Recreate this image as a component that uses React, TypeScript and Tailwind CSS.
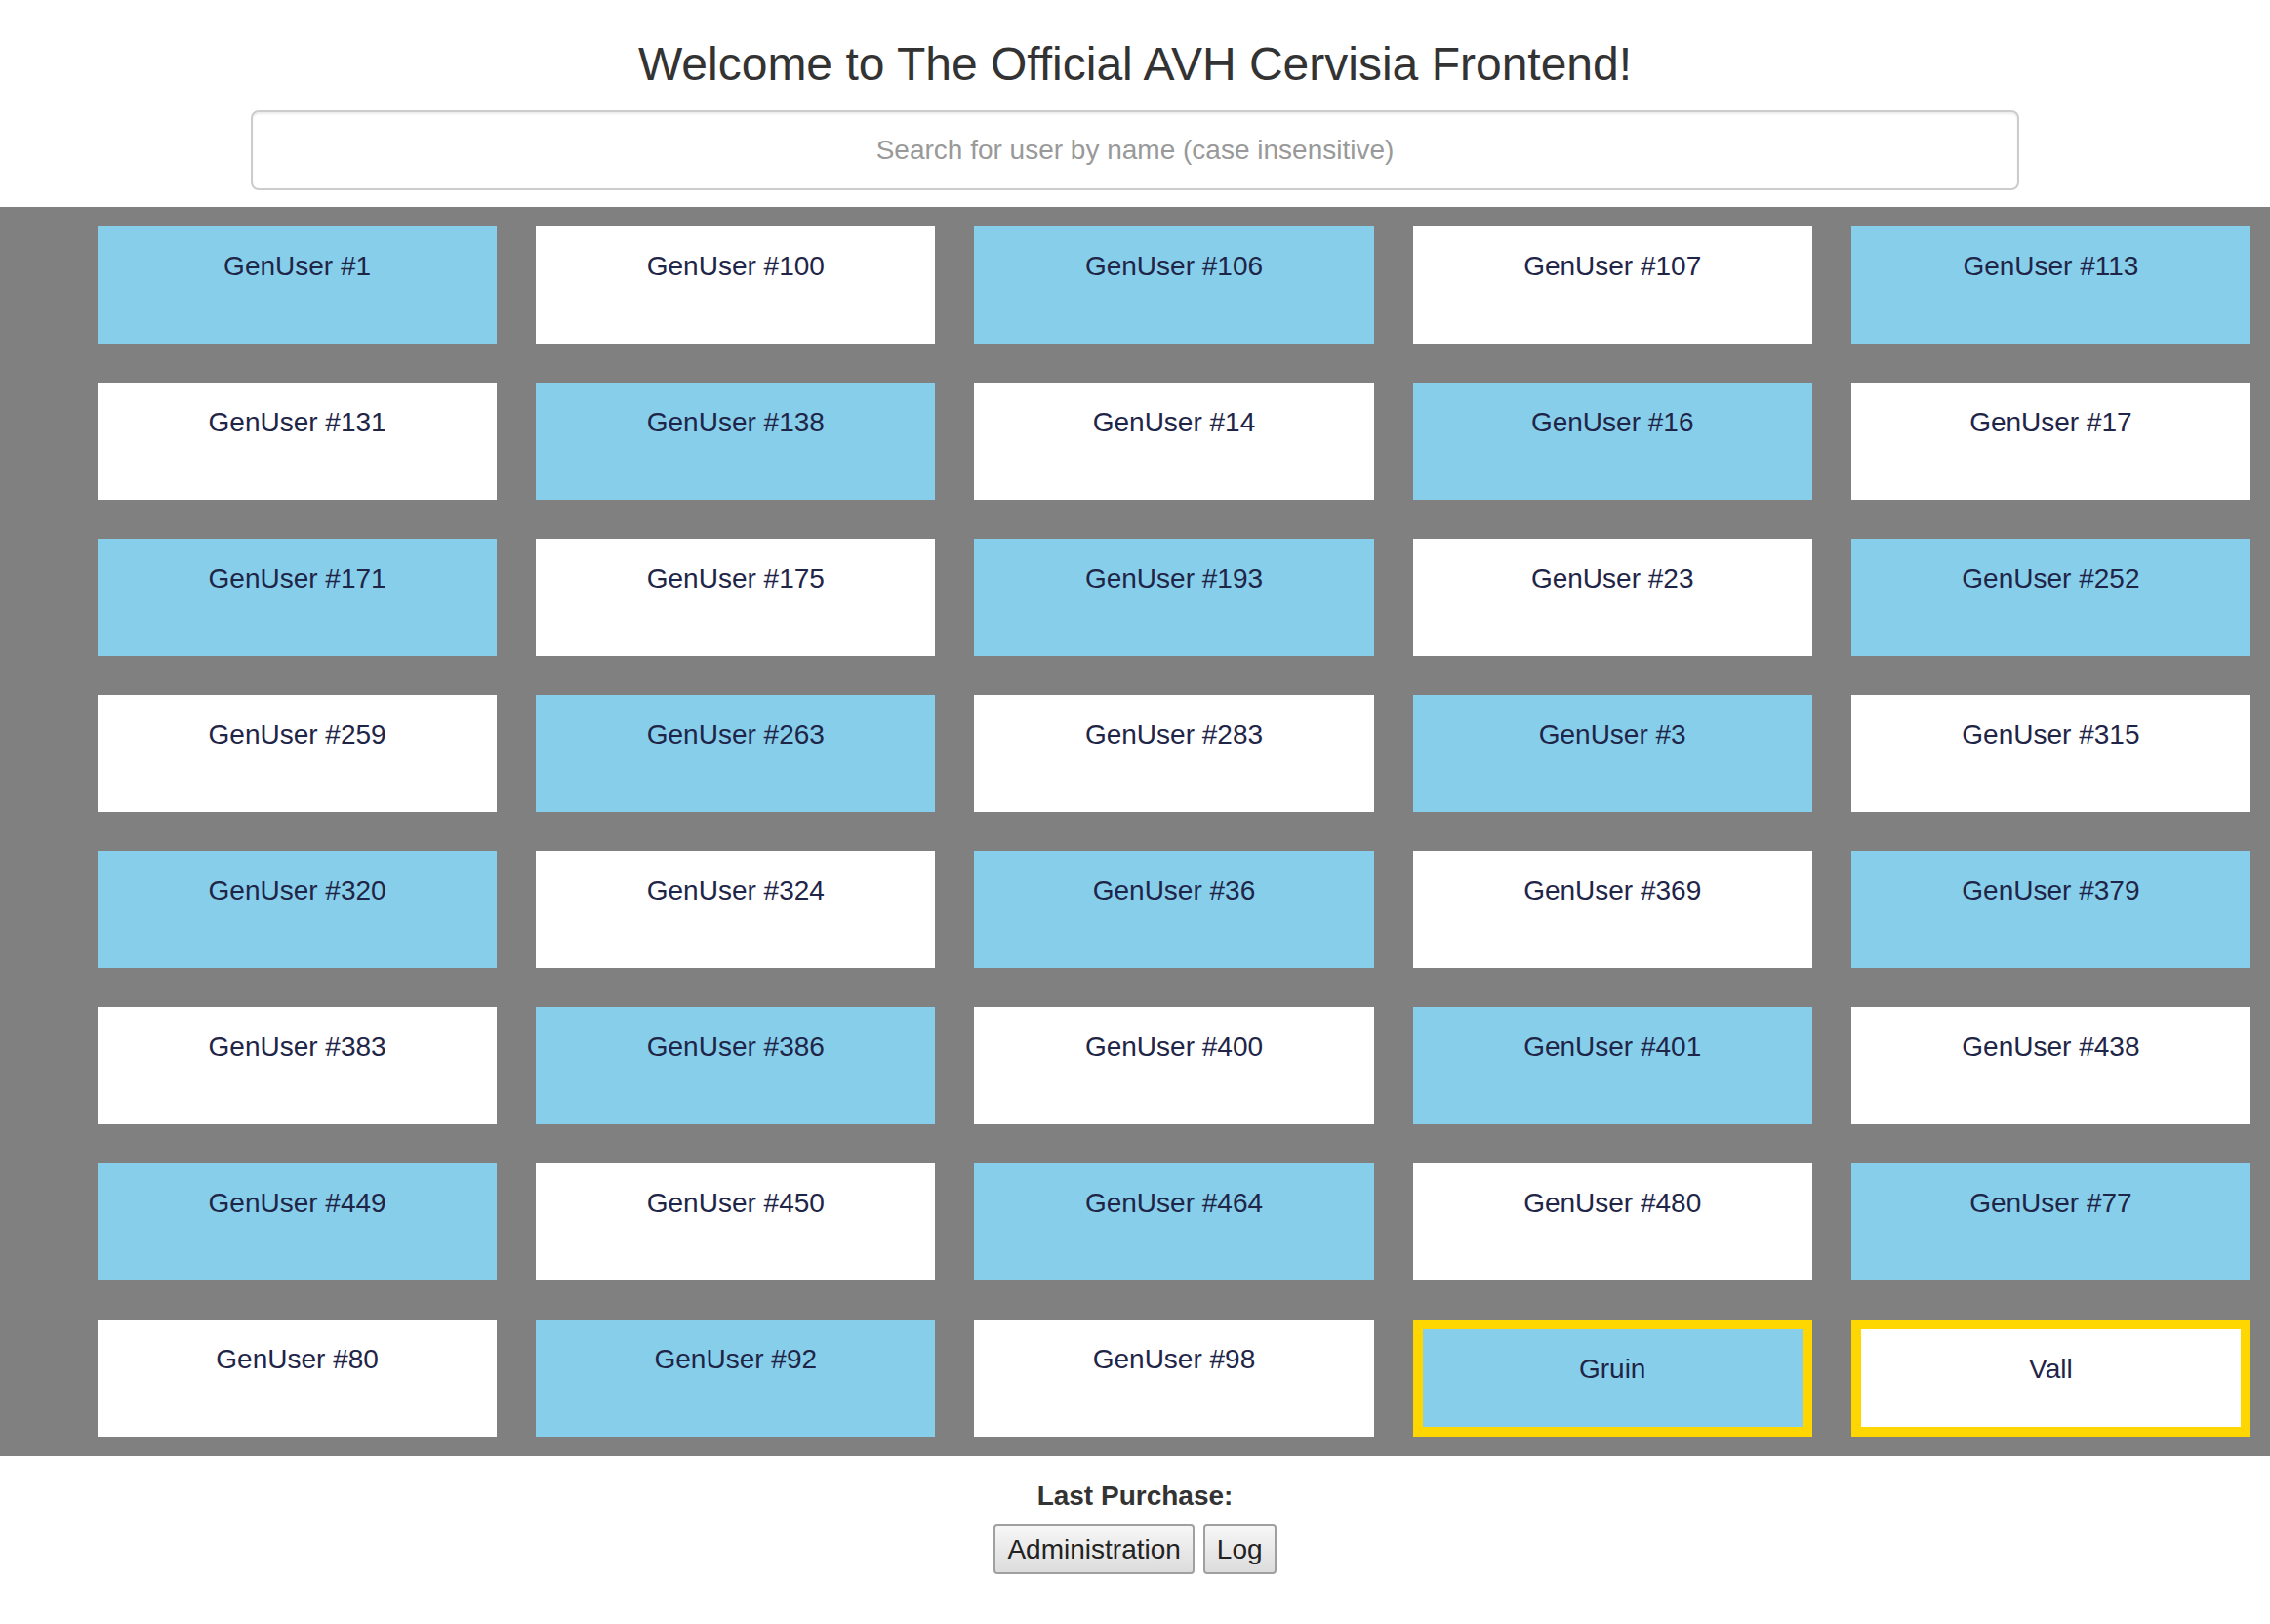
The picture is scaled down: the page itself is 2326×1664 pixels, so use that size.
import { useState } from "react";

const genIds = [
  1, 100, 106, 107, 113, 131, 138, 14, 16, 17, 171, 175, 193, 23, 252, 259,
  263, 283, 3, 315, 320, 324, 36, 369, 379, 383, 386, 400, 401, 438, 449, 450,
  464, 480, 77, 80, 92, 98,
];

interface User {
  name: string;
  highlighted: boolean;
}

const users: User[] = [
  ...genIds.map((id) => ({ name: `GenUser #${id}`, highlighted: false })),
  { name: "Gruin", highlighted: true },
  { name: "Vall", highlighted: true },
];

export default function App() {
  const [search, setSearch] = useState("");

  const filtered = users.filter((user) =>
    user.name.toLowerCase().includes(search.toLowerCase())
  );

  return (
    <main className="min-h-screen bg-white font-['Liberation_Sans',Arial,sans-serif] text-[#333]">
      <h1 className="mt-[40px] mb-[20px] text-center text-[48px] leading-[52.8px] font-normal">
        Welcome to The Official AVH Cervisia Frontend!
      </h1>

      <input
        type="text"
        value={search}
        onChange={(event) => setSearch(event.target.value)}
        placeholder="Search for user by name (case insensitive)"
        className="block mx-auto w-[1812px] h-[82px] border-2 border-[#ccc] rounded-[8px] text-center text-[28px] text-[#555] placeholder:text-[#999] shadow-[inset_0_2px_2px_rgba(0,0,0,0.075)] outline-none"
      />

      <div className="mt-[17px] bg-[#808080] pt-[20px] pb-[20px] pl-[100px] pr-[20px] grid grid-cols-5 gap-x-[40px] gap-y-[40px]">
        {filtered.map((user, index) => (
          <div
            key={user.name}
            className={
              "h-[120px] pt-[21px] text-center text-[28px] leading-[40px] text-[#1f2547] cursor-pointer " +
              (index % 2 === 0 ? "bg-[#87ceeb] " : "bg-white ") +
              (user.highlighted ? "border-[10px] border-[#ffd700]" : "")
            }
          >
            {user.name}
          </div>
        ))}
      </div>

      <div className="mt-[21px] text-center">
        <p className="text-[28px] leading-[40px] font-bold">Last Purchase:</p>

        <div className="mt-[9px] flex justify-center gap-[9px]">
          <button className="h-[51px] px-[12px] pt-[2px] border-2 border-[#a0a0a0] rounded-[4px] bg-gradient-to-b from-[#f7f7f7] to-[#dcdcdc] text-[28px] text-[#222]">
            Administration
          </button>
          <button className="h-[51px] px-[12px] pt-[2px] border-2 border-[#a0a0a0] rounded-[4px] bg-gradient-to-b from-[#f7f7f7] to-[#dcdcdc] text-[28px] text-[#222]">
            Log
          </button>
        </div>
      </div>
    </main>
  );
}
